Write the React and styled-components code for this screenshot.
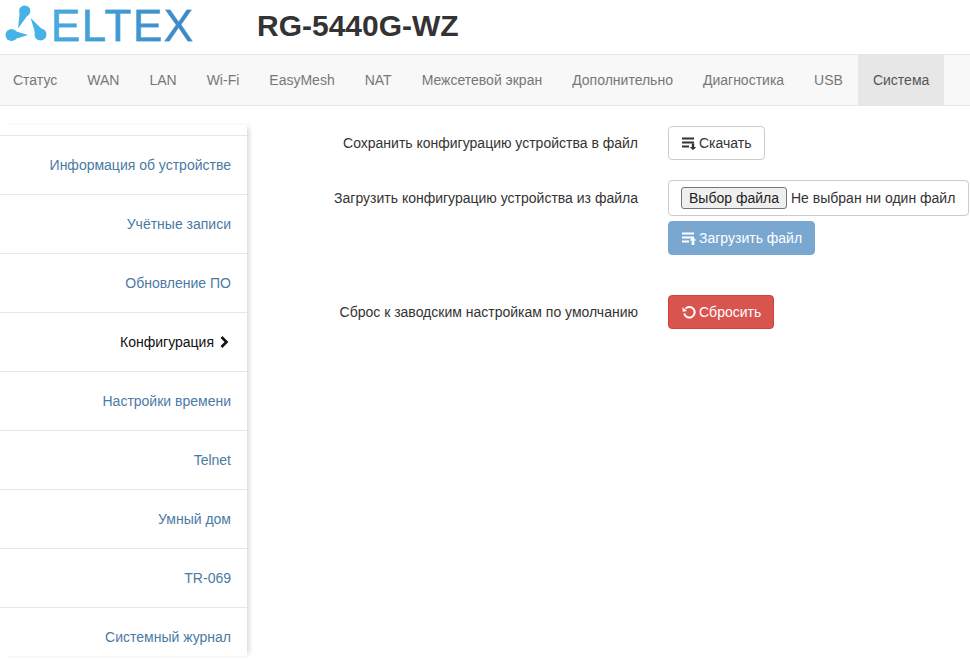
import React from "react";
import styled, { createGlobalStyle } from "styled-components";

const Global = createGlobalStyle`
  html, body { margin: 0; padding: 0; background: #fff; height: 660px; overflow: hidden; }
  * { box-sizing: border-box; }
  body { font-family: "Liberation Sans", Arial, sans-serif; font-size: 14px; color: #333; }
`;

const Header = styled.header`
  height: 55px;
  display: flex;
  align-items: center;
  border-bottom: 1px solid #e7e7e7;
`;
const Logo = styled.div`
  width: 257px;
  height: 54px;
  padding: 2px 0 0 4px;
  display: flex;
  align-items: flex-start;
`;
const Mark = styled.svg`
  width: 46px;
  height: 44px;
  flex: none;
`;
const Wordmark = styled.span`
  margin: -0.5px 0 0 1px;
  font-family: "Liberation Sans", sans-serif;
  font-size: 44px;
  line-height: 48px;
  letter-spacing: 1.5px;
  background: linear-gradient(90deg, #45aee0, #3d85c4);
  -webkit-background-clip: text;
  background-clip: text;
  color: transparent;
  -webkit-text-stroke: 0.4px rgba(64, 150, 210, 0.8);
`;
const Model = styled.h1`
  margin: 0 0 4px;
  font-size: 30px;
  font-weight: 700;
  color: #333;
  line-height: 33px;
`;
const Nav = styled.nav`
  height: 51px;
  display: flex;
  background: #f8f8f8;
  border-bottom: 1px solid #e7e7e7;
`;
const NavItem = styled.a`
  display: flex;
  align-items: center;
  padding: 0 15px 0 ${(p) => (p.$first ? "13px" : "15px")};
  background: ${(p) => (p.$active ? "#e7e7e7" : "transparent")};
  color: ${(p) => (p.$active ? "#555" : "#777")};
`;
const Main = styled.div`
  display: flex;
  align-items: flex-start;
  margin-top: 19px;
`;
const Sidebar = styled.aside`
  width: 247px;
  height: 531px;
  overflow: hidden;
  padding-top: 10px;
  flex: none;
  background: #fff;
  box-shadow: 4px 0 5px -2px rgba(0, 0, 0, 0.16);
`;
const SideItem = styled.a`
  display: flex;
  align-items: center;
  justify-content: flex-end;
  height: 59px;
  padding: 0 16px 0 0;
  border-top: 1px solid #e7e7e7;
  color: ${(p) => (p.$active ? "#111" : "#4b7aa3")};
  gap: 6px;
`;
const Form = styled.section`
  flex: 1;
  display: grid;
  grid-template-columns: 391px 1fr;
  column-gap: 30px;
  align-content: start;
`;
const Label = styled.div`
  text-align: right;
  line-height: 20px;
  color: #333;
  margin-top: ${(p) => p.$top}px;
`;
const Control = styled.div`
  margin-top: ${(p) => p.$top}px;
  display: flex;
  flex-direction: column;
  align-items: flex-start;
  gap: 5px;
`;
const Button = styled.button`
  height: 34px;
  display: inline-flex;
  align-items: center;
  gap: 2px;
  padding: 0 12px;
  font: inherit;
  border-radius: 4px;
  border: 1px solid ${(p) => p.$border};
  background: ${(p) => p.$bg};
  color: ${(p) => p.$fg};
`;
const FileBox = styled.div`
  width: 301px;
  height: 36px;
  display: flex;
  align-items: center;
  padding-left: 12px;
  border: 1px solid #ccc;
  border-radius: 4px;
  color: #333;
  white-space: nowrap;
  background: #fff;
`;
const FileButton = styled.span`
  height: 22px;
  width: 106px;
  display: flex;
  align-items: center;
  justify-content: center;
  border: 1px solid #767676;
  border-radius: 3px;
  background: #efefef;
  color: #222;
  margin-right: 4px;
`;

const Glyph = styled.svg`
  width: 16px;
  height: 14px;
  flex: none;
`;

const ListIcon = ({ up }) => (
  <Glyph viewBox="0 0 16 14" fill="currentColor">
    <rect x="1" y="1.5" width="12" height="2" />
    <rect x="1" y="5.5" width="12" height="2" />
    <rect x="1" y="9.5" width="7" height="2" />
    {up ? (
      <path d="M12 6l3.4 3.6h-2V14h-2.8V9.6h-2z" />
    ) : (
      <path d="M10.8 7.5h2.4v3.4h2L12 14.2l-3.2-3.3h2z" />
    )}
  </Glyph>
);

const ResetIcon = () => (
  <Glyph viewBox="0 0 16 14" fill="none" stroke="currentColor" strokeWidth="2">
    <path d="M4.5 3.6A5.3 5.3 0 1 1 3.2 8.6" />
    <path d="M1.4 2.2l.3 4.6 4.4-.8z" fill="currentColor" stroke="none" />
  </Glyph>
);

const Chevron = styled.svg`
  width: 9px;
  height: 12px;
  margin-right: 2px;
  flex: none;
`;

const navItems = ["Статус", "WAN", "LAN", "Wi-Fi", "EasyMesh", "NAT", "Межсетевой экран", "Дополнительно", "Диагностика", "USB", "Система"];
const sideItems = ["Информация об устройстве", "Учётные записи", "Обновление ПО", "Конфигурация", "Настройки времени", "Telnet", "Умный дом", "TR-069", "Системный журнал"];

export default function App() {
  return (
    <>
      <Global />
      <Header>
        <Logo>
          <Mark viewBox="0 0 46 44" fill="#45b3e8">
            <polygon points="25.4,10.8 16,7.2 14,26.5" />
            <polygon points="7.5,28 7.5,38 24,33" />
            <polygon points="40.8,30 32.2,35 26.7,16" />
            <circle cx="20.7" cy="9" r="5.6" />
            <circle cx="7.5" cy="33" r="6" />
            <circle cx="36.5" cy="32.5" r="6" />
          </Mark>
          <Wordmark>ELTEX</Wordmark>
        </Logo>
        <Model>RG-5440G-WZ</Model>
      </Header>
      <Nav>
        {navItems.map((n, i) => (
          <NavItem key={n} $first={i === 0} $active={n === "Система"}>{n}</NavItem>
        ))}
      </Nav>
      <Main>
        <Sidebar>
          {sideItems.map((s) => (
            <SideItem key={s} $active={s === "Конфигурация"}>
              {s}
              {s === "Конфигурация" && (
                <Chevron viewBox="0 0 9 12">
                  <path d="M1.5 1l5 5-5 5" fill="none" stroke="#111" strokeWidth="2.6" />
                </Chevron>
              )}
            </SideItem>
          ))}
        </Sidebar>
        <Form>
          <Label $top={8}>Сохранить конфигурацию устройства в файл</Label>
          <Control $top={1}>
            <Button $bg="#fff" $border="#ccc" $fg="#333"><ListIcon />Скачать</Button>
          </Control>
          <Label $top={28}>Загрузить конфигурацию устройства из файла</Label>
          <Control $top={20}>
            <FileBox><FileButton>Выбор файла</FileButton>Не выбран ни один файл</FileBox>
            <Button $bg="#7aa7d0" $border="#7aa7d0" $fg="#fff"><ListIcon up />Загрузить файл</Button>
          </Control>
          <Label $top={47}>Сброс к заводским настройкам по умолчанию</Label>
          <Control $top={40}>
            <Button $bg="#d9534f" $border="#d43f3a" $fg="#fff"><ResetIcon />Сбросить</Button>
          </Control>
        </Form>
      </Main>
    </>
  );
}
